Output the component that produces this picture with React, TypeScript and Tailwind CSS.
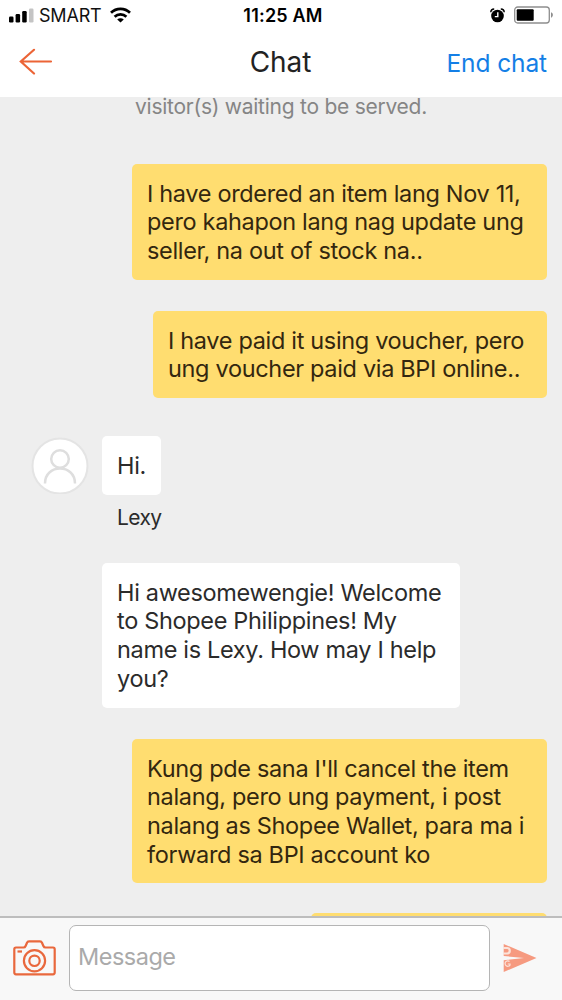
import type { ReactNode } from "react";

interface BubbleProps {
  lines: string[];
  mine?: boolean;
  className?: string;
}

function Bubble({ lines, mine, className = "" }: BubbleProps) {
  const color = mine ? "bg-[#ffdd70] text-[#33270f]" : "bg-white text-[#2b2b2b]";

  return (
    <div
      className={`shrink-0 rounded-[5px] px-[15px] pb-[14px] pt-4 text-[23.5px] leading-[28.7px] tracking-[-0.33px] ${color} ${className}`}
    >
      {lines.map((line) => (
        <p key={line} className="whitespace-nowrap">
          {line}
        </p>
      ))}
    </div>
  );
}

function Row({ children, className = "" }: { children: ReactNode; className?: string }) {
  return <div className={`flex shrink-0 ${className}`}>{children}</div>;
}

function StatusBar() {
  return (
    <div className="flex h-[30px] items-center justify-between pl-[9px] pr-2">
      <div className="flex w-[182px] items-center">
        <svg width="25" height="15" viewBox="0 0 25 15">
          <rect x="0" y="8.5" width="4.5" height="6" rx="1.2" />
          <rect x="6.6" y="6" width="4.5" height="8.5" rx="1.2" />
          <rect x="13.2" y="3" width="4.5" height="11.5" rx="1.2" />
          <rect x="20" y="0.5" width="4.5" height="14" rx="1.2" fill="#c4c4c4" />
        </svg>
        <span className="ml-[5px] text-[18px] tracking-[-0.2px] text-[#111]">SMART</span>
        <svg className="ml-[9px]" width="21" height="16" viewBox="0 0 21 16" fill="none" stroke="#000" strokeWidth="2.7">
          <path d="M1 5.8C6.2 0.5 14.8 0.5 20 5.8" />
          <path d="M4.6 9.8C7.9 6.6 13.1 6.6 16.4 9.8" />
          <path d="M10.5 15.5L7.2 12.4C9 10.9 12 10.9 13.8 12.4Z" fill="#000" stroke="none" />
        </svg>
      </div>
      <span className="text-[18px] font-semibold tracking-[0.2px] text-black">11:25 AM</span>
      <div className="flex w-[179px] items-center justify-end">
        <svg width="15" height="15" viewBox="0 0 15 15">
          <circle cx="7.5" cy="8" r="6.3" />
          <path d="M0.8 4.2A3.4 3.4 0 0 1 4.2 0.9M14.2 4.2A3.4 3.4 0 0 0 10.8 0.9" fill="none" stroke="#000" strokeWidth="1.5" />
          <path d="M7.8 4.2V8.6H4.8" fill="none" stroke="#fff" strokeWidth="1.4" />
        </svg>
        <svg className="ml-[9px]" width="40" height="18" viewBox="0 0 40 18">
          <rect x="0.7" y="1" width="34.6" height="16" rx="3" fill="none" stroke="#8e8e8e" strokeWidth="1.3" />
          <rect x="2.7" y="3.3" width="17" height="11.4" rx="1" />
          <path d="M37 6.3C39.5 7 39.5 11 37 11.7Z" fill="#8e8e8e" />
        </svg>
      </div>
    </div>
  );
}

function NavBar() {
  return (
    <div className="flex h-[67px] items-center justify-between pb-1 pl-[19px] pr-[15px]">
      <div className="w-[123px]">
        <svg width="34" height="27" viewBox="0 0 34 27" fill="none" stroke="#ec6436" strokeWidth="2.2" strokeLinecap="round">
          <path d="M32 13.5H2M15 1.8L1.8 13.5L15 25.5" />
        </svg>
      </div>
      <h1 className="text-[28px] tracking-[-0.1px] text-[#222]">Chat</h1>
      <button className="w-[128px] whitespace-nowrap pt-[3px] text-right text-[24.5px] tracking-[-0.1px] text-[#147fe6]">
        End chat
      </button>
    </div>
  );
}

function Avatar() {
  return (
    <svg className="shrink-0" width="58" height="58" viewBox="0 0 58 58" fill="none">
      <circle cx="29" cy="30" r="27.5" fill="#fff" stroke="#e4e4e4" strokeWidth="2" />
      <g stroke="#dedede" strokeWidth="2.5">
        <circle cx="29" cy="23" r="8.8" />
        <path d="M14 47.5C14 27.5 44 27.5 44 47.5" />
      </g>
    </svg>
  );
}

function Composer() {
  return (
    <div className="flex h-[84px] shrink-0 items-center border-t-2 border-[#bdbdbd] bg-[#f8f8f8] pb-[2px] pl-[13px]">
      <svg className="shrink-0" width="43" height="36" viewBox="0 0 43 36" fill="none" stroke="#e9683d" strokeWidth="2.2">
        <path d="M3 7.5H10.5Q12 7.5 12.6 6L14 2.8Q14.5 1.3 16 1.3H27Q28.5 1.3 29 2.8L30.4 6Q31 7.5 32.5 7.5H40Q41.7 7.5 41.7 9.2V32.6Q41.7 34.3 40 34.3H3Q1.3 34.3 1.3 32.6V9.2Q1.3 7.5 3 7.5Z" />
        <circle cx="21.5" cy="20.8" r="10.6" />
        <circle cx="21.5" cy="20.8" r="5.2" />
        <path d="M4.5 11.5H9" />
      </svg>
      <div className="ml-[13px] flex h-[66px] w-[421px] shrink-0 items-center rounded-[7px] border-[1.5px] border-[#b5b5b5] bg-white pb-[3px] pl-2 text-[23.5px] tracking-[-0.5px] text-[#aaaaaa]">
        Message
      </div>
      <svg className="ml-[13px] shrink-0" width="34" height="30" viewBox="0 0 34 30">
        <path d="M0.7 1L33.5 15L0.7 29V17.2L21 15L0.7 13Z" fill="#f69a80" />
        <path d="M0 5H4.5A2.8 2.8 0 0 1 4.5 10.5H0" fill="none" stroke="#fbe3da" strokeWidth="2.2" />
        <path d="M6.5 18.5A2.7 2.7 0 1 0 7 22.2V21H4.8" fill="none" stroke="#fbe3da" strokeWidth="1.2" />
      </svg>
    </div>
  );
}

export default function App() {
  return (
    <div className="flex h-[1000px] w-[562px] flex-col overflow-hidden bg-[#eeeeee] font-['Inter',sans-serif]">
      <header className="h-[97px] shrink-0 bg-white">
        <StatusBar />
        <NavBar />
      </header>

      <main className="flex min-h-0 flex-1 flex-col pr-[15px]">
        <p className="h-[19px] shrink-0 pl-[135px] text-[21px] leading-[19px] tracking-[-0.25px] text-[#858585]">
          visitor(s) waiting to be served.
        </p>
        <Row className="mt-[47.5px] justify-end">
          <Bubble
            mine
            className="w-[415px]"
            lines={["I have ordered an item lang Nov 11,", "pero kahapon lang nag update ung", "seller, na out of stock na.."]}
          />
        </Row>
        <Row className="mt-[31px] justify-end">
          <Bubble mine className="w-[394px]" lines={["I have paid it using voucher, pero", "ung voucher paid via BPI online.."]} />
        </Row>
        <Row className="mt-[38px] items-center pl-[31px]">
          <Avatar />
          <Bubble className="ml-[13px] w-[59px]" lines={["Hi."]} />
        </Row>
        <p className="mt-[9px] h-7 shrink-0 pl-[117px] text-[21px] leading-7 tracking-[-0.6px] text-[#2b2b2b]">Lexy</p>
        <Row className="mt-[31px] pl-[102px]">
          <Bubble
            className="w-[358px]"
            lines={["Hi awesomewengie! Welcome", "to Shopee Philippines! My", "name is Lexy. How may I help", "you?"]}
          />
        </Row>
        <Row className="mt-[31px] justify-end">
          <Bubble
            mine
            className="w-[415px]"
            lines={[
              "Kung pde sana I'll cancel the item",
              "nalang, pero ung payment, i post",
              "nalang as Shopee Wallet, para ma i",
              "forward sa BPI account ko",
            ]}
          />
        </Row>
        {/* next message, only its top edge shows above the composer */}
        <Row className="mt-[30px] justify-end">
          <Bubble mine className="w-[236px]" lines={[""]} />
        </Row>
      </main>

      <Composer />
    </div>
  );
}
